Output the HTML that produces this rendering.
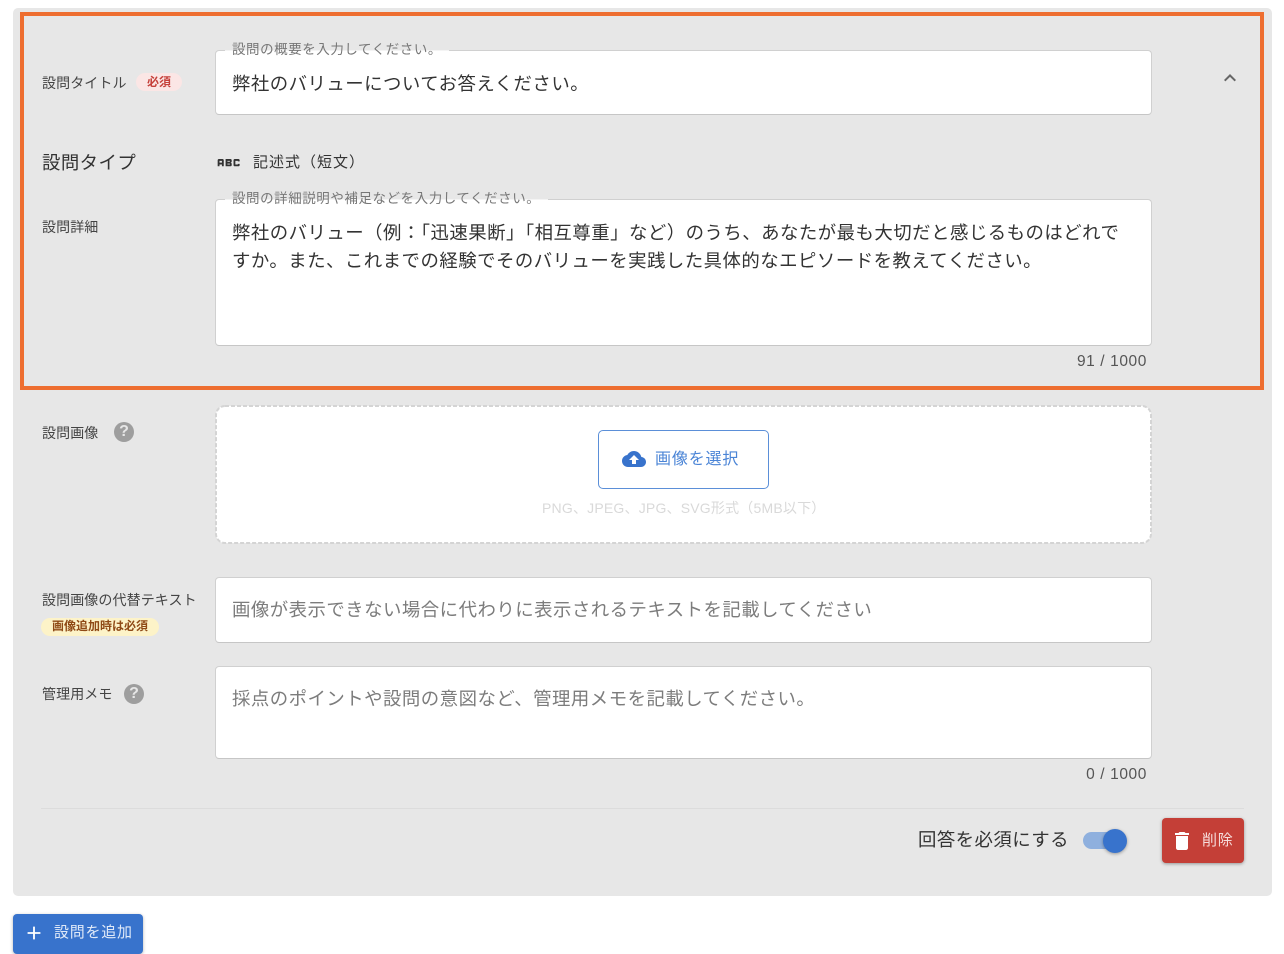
<!DOCTYPE html>
<html lang="ja"><head><meta charset="utf-8">
<style>
html,body{margin:0;padding:0;background:#fff;}
body{width:1284px;height:946px;position:relative;overflow:hidden;font-family:"Liberation Sans","Noto Sans CJK JP",sans-serif;color:#333;}
.a{position:absolute;white-space:nowrap;}
.panel{position:absolute;left:13px;top:8px;width:1259px;height:888px;background:#e7e7e7;border-radius:5px;}
.orange{position:absolute;left:20px;top:12px;width:1236px;height:370px;border:4px solid #ee6e30;}
.input{position:absolute;left:215px;width:935px;background:#fff;border:1px solid #d0d0d0;border-bottom-color:#c6c6c6;border-radius:4px;}
.notch{position:absolute;height:1px;background:#f4f4f4;}
.t{font-size:18.4px;letter-spacing:.49px;line-height:26px;color:#333;}
.ph{color:#7c7c7c;}
.lab{font-size:14px;letter-spacing:.1px;line-height:20px;color:#444;}
.leg{font-size:13.5px;letter-spacing:.55px;line-height:14px;color:#777;}
.cnt{font-size:15.5px;letter-spacing:.6px;color:#555;line-height:18px;}
.q{position:absolute;width:20px;height:20px;border-radius:50%;background:#9e9e9e;color:#e7e7e7;font-size:16px;font-weight:700;line-height:20px;text-align:center;}
</style></head><body>
<div class="panel"></div>
<div class="orange"></div>

<div class="a lab" style="left:42px;top:73px">設問タイトル</div>
<div class="a" style="left:136px;top:73px;width:46px;height:18px;border-radius:9px;background:#fbe6e5;color:#c5403a;font-size:12px;font-weight:700;line-height:18px;text-align:center">必須</div>
<div class="input" style="top:50px;height:63px"></div>
<div class="notch" style="left:225px;top:50px;width:224px"></div>
<div class="a leg" style="left:232px;top:43px">設問の概要を入力してください。</div>
<div class="a t" style="left:232px;top:71px">弊社のバリューについてお答えください。</div>
<svg class="a" style="left:1218px;top:66px" width="24" height="24" viewBox="0 0 24 24"><path fill="#666" d="M12 8l-6 6 1.41 1.41L12 10.83l4.59 4.58L18 14z"/></svg>

<div class="a" style="left:42px;top:150px;font-size:18.4px;letter-spacing:.45px;line-height:26px;color:#333">設問タイプ</div>
<svg class="a" style="left:214px;top:148px" width="29.3" height="29.3" viewBox="0 0 24 24"><path fill="#333" d="M21 11h-1.5v-.5h-2v3h2V13H21v1c0 .55-.45 1-1 1h-3c-.55 0-1-.45-1-1v-4c0-.55.45-1 1-1h3c.55 0 1 .45 1 1v1zM8 10v5H6.5v-1.5h-2V15H3v-5c0-.55.45-1 1-1h3c.55 0 1 .45 1 1zm-1.5.5h-2V12h2v-1.5zm7 1.5c.55 0 1 .45 1 1v1c0 .55-.45 1-1 1h-4V9h4c.55 0 1 .45 1 1v1c0 .55-.45 1-1 1zM11 10.5v.75h2v-.75h-2zm2 2.25h-2v.75h2v-.75z"/></svg>
<div class="a" style="left:253px;top:152px;font-size:15px;letter-spacing:1px;line-height:22px;color:#333">記述式（短文）</div>

<div class="a lab" style="left:42px;top:217px">設問詳細</div>
<div class="input" style="top:199px;height:145px"></div>
<div class="notch" style="left:225px;top:199px;width:323px"></div>
<div class="a leg" style="left:232px;top:192px">設問の詳細説明や補足などを入力してください。</div>
<div class="a t" style="left:232px;top:219px;line-height:28px">弊社のバリュー（例：「迅速果断」「相互尊重」など）のうち、あなたが最も大切だと感じるものはどれで<br>すか。また、これまでの経験でそのバリューを実践した具体的なエピソードを教えてください。</div>
<div class="a cnt" style="right:137px;top:353px">91 / 1000</div>

<div class="a lab" style="left:42px;top:423px">設問画像</div>
<div class="q" style="left:114px;top:422px">?</div>
<svg class="a" style="left:215px;top:405px" width="937" height="139"><rect x="1" y="1" width="935" height="137" rx="9" fill="#fff" stroke="#d4d4d4" stroke-width="2" stroke-dasharray="4 2"/></svg>
<div class="a" style="left:598px;top:430px;width:169px;height:57px;border:1px solid #5b8fd8;border-radius:5px;background:#fff"></div>
<svg class="a" style="left:622px;top:447px" width="24" height="24" viewBox="0 0 24 24"><path fill="#3873cc" d="M19.35 10.04C18.67 6.59 15.64 4 12 4 9.11 4 6.6 5.64 5.35 8.04 2.34 8.36 0 10.91 0 14c0 3.31 2.69 6 6 6h13c2.76 0 5-2.24 5-5 0-2.64-2.05-4.78-4.65-4.96zM14 13v4h-4v-4H7l5-5 5 5h-3z"/></svg>
<div class="a" style="left:655px;top:449px;font-size:16px;letter-spacing:.85px;line-height:22px;color:#4a84d6">画像を選択</div>
<div class="a" style="left:542px;top:499px;font-size:14px;letter-spacing:.2px;line-height:18px;color:#d9d9d9">PNG、JPEG、JPG、SVG形式（5MB以下）</div>

<div class="a lab" style="left:42px;top:590px">設問画像の代替テキスト</div>
<div class="a" style="left:41px;top:618px;width:118px;height:18px;border-radius:9px;background:#fdf3c8;color:#8f4a16;font-size:12px;font-weight:700;line-height:17px;text-align:center">画像追加時は必須</div>
<div class="input" style="top:577px;height:64px"></div>
<div class="a t ph" style="left:232px;top:597px">画像が表示できない場合に代わりに表示されるテキストを記載してください</div>

<div class="a lab" style="left:42px;top:684px">管理用メモ</div>
<div class="q" style="left:124px;top:684px">?</div>
<div class="input" style="top:666px;height:91px"></div>
<div class="a t ph" style="left:232px;top:686px">採点のポイントや設問の意図など、管理用メモを記載してください。</div>
<div class="a cnt" style="right:137px;top:766px">0 / 1000</div>

<div class="a" style="left:41px;top:808px;width:1203px;height:1px;background:#dcdcdc"></div>
<div class="a" style="left:918px;top:828px;font-size:18.4px;letter-spacing:.45px;line-height:24px;color:#333">回答を必須にする</div>
<div class="a" style="left:1083px;top:832px;width:40px;height:17px;border-radius:9px;background:#8fb0de"></div>
<div class="a" style="left:1103px;top:829px;width:24px;height:24px;border-radius:50%;background:#3873cc;box-shadow:0 1px 3px rgba(0,0,0,.35)"></div>
<div class="a" style="left:1162px;top:818px;width:82px;height:45px;border-radius:4px;background:#c43f37;box-shadow:0 1px 3px rgba(0,0,0,.35)"></div>
<svg class="a" style="left:1170px;top:829px" width="24" height="24" viewBox="0 0 24 24"><path fill="#fff" d="M6 19c0 1.1.9 2 2 2h8c1.1 0 2-.9 2-2V7H6v12zM19 4h-3.5l-1-1h-5l-1 1H5v2h14V4z"/></svg>
<div class="a" style="left:1202px;top:831px;font-size:15px;letter-spacing:.75px;line-height:20px;color:#f6dcdb">削除</div>

<div class="a" style="left:13px;top:914px;width:130px;height:40px;border-radius:4px;background:#3873cc;box-shadow:0 1px 3px rgba(0,0,0,.3)"></div>
<svg class="a" style="left:22.5px;top:922px" width="22" height="22" viewBox="0 0 24 24"><path fill="#fff" d="M19 13h-6v6h-2v-6H5v-2h6V5h2v6h6v2z"/></svg>
<div class="a" style="left:54px;top:923px;font-size:15px;letter-spacing:.75px;line-height:20px;color:#dfe9f8">設問を追加</div>
</body></html>
